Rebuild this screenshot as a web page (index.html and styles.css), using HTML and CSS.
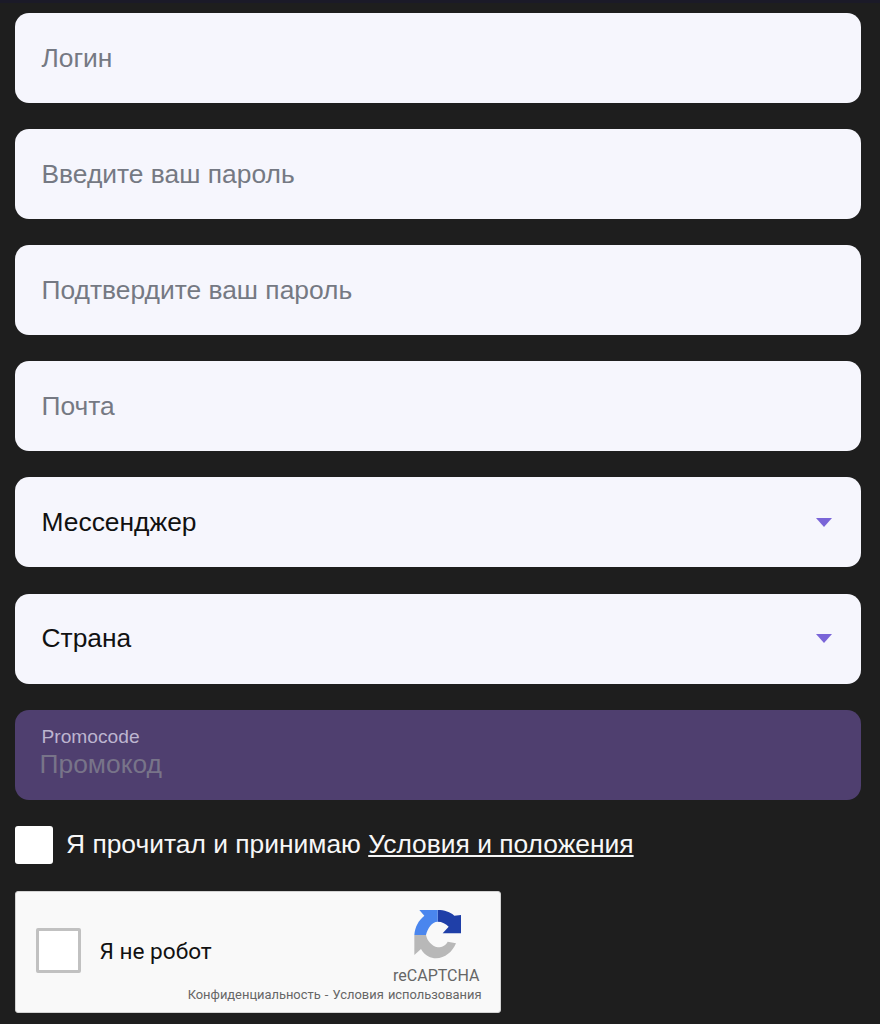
FILE: index.html
```html
<!DOCTYPE html>
<html lang="ru">
<head>
<meta charset="utf-8">
<title>Регистрация</title>
<link rel="stylesheet" href="styles.css">
</head>
<body>
<form class="form">
  <div class="field placeholder">Логин</div>
  <div class="field placeholder">Введите ваш пароль</div>
  <div class="field placeholder">Подтвердите ваш пароль</div>
  <div class="field placeholder">Почта</div>
  <div class="field select"><span>Мессенджер</span><i class="caret"></i></div>
  <div class="field select"><span>Страна</span><i class="caret"></i></div>
  <div class="promo">
    <div class="promo-label">Promocode</div>
    <div class="promo-value">Промокод</div>
  </div>
  <div class="terms">
    <span class="terms-box"></span>
    <span class="terms-text">Я прочитал и принимаю <a href="#" class="terms-link">Условия и положения</a></span>
  </div>
  <div class="captcha">
    <span class="captcha-box"></span>
    <span class="captcha-label">Я не робот</span>
    <div class="captcha-brand">
      <svg class="captcha-logo" viewBox="0 0 240 195" aria-hidden="true">
        <path fill="#1f3fa8" d="M110 30C130 30 148 36 160 47L180 45V100H125L143 80C135 71 123 65 110 65Z"/>
        <path fill="#4a86ee" d="M55 30H110V65C92 65 80 85 75 105H40C42 80 52 62 70 47Z"/>
        <path fill="#b8b8b8" d="M40 105H75C78 122 92 138 110 142C125 142 135 135 140 125L165 130C155 155 132 175 105 175C90 175 72 168 60 147L40 165Z"/>
      </svg>
      <div class="captcha-name">reCAPTCHA</div>
      <div class="captcha-links">Конфиденциальность - Условия использования</div>
    </div>
  </div>
</form>
</body>
</html>
```

FILE: styles.css
```css
* { box-sizing: border-box; }
html, body { margin: 0; padding: 0; }
body {
  width: 880px;
  height: 1024px;
  overflow: hidden;
  background: #1e1e1e;
  font-family: "Liberation Sans", Arial, sans-serif;
}
.form {
  display: flex;
  flex-direction: column;
  gap: 26.12px;
  border-top: 3px solid #1b1a28;
  padding: 10px 19.5px 0 14.5px;
}
.field {
  height: 90px;
  background: #f6f6fd;
  border-radius: 14px;
  padding: 0 27px;
  display: flex;
  align-items: center;
  justify-content: space-between;
  font-size: 26.4px;
  color: #111;
}
.placeholder { color: #757983; }
.caret {
  width: 0;
  height: 0;
  margin-right: 2px;
  border-left: 8px solid transparent;
  border-right: 8px solid transparent;
  border-top: 9px solid #7a65d8;
}
.promo {
  height: 90px;
  background: #4f3f6f;
  border-radius: 14px;
  padding: 16px 25px 0;
}
.promo-label {
  font-size: 19.2px;
  line-height: 22px;
  margin-left: 2px;
  color: #bdb5d0;
}
.promo-value {
  font-size: 26.4px;
  line-height: 32px;
  color: #787489;
}
.terms {
  display: flex;
  align-items: center;
  gap: 13px;
  height: 38px;
  padding-left: 0.5px;
}
.terms-box {
  width: 38px;
  height: 38px;
  background: #fff;
  border-radius: 3px;
}
.terms-text {
  font-size: 26.4px;
  color: #f7f7f7;
}
.terms-link {
  color: #f7f7f7;
  text-decoration: underline;
}
.captcha {
  position: relative;
  margin-top: 1px;
  width: 486.5px;
  height: 122px;
  background: #f9f9f9;
  border: 1px solid #d3d3d3;
  border-radius: 3px;
  display: flex;
  align-items: center;
  padding-left: 20px;
}
.captcha-box {
  width: 45px;
  height: 45px;
  margin-top: -3px;
  background: #fff;
  border: 3px solid #c1c1c1;
  border-radius: 2px;
}
.captcha-label {
  margin-left: 19px;
  font-family: Roboto, sans-serif;
  font-size: 22.6px;
  color: #111;
}
.captcha-brand {
  position: absolute;
  right: 18.5px;
  top: 8px;
  display: flex;
  flex-direction: column;
  align-items: flex-end;
  font-family: Roboto, sans-serif;
}
.captcha-logo {
  width: 80px;
  height: 65px;
  margin-right: 1px;
}
.captcha-name {
  margin-top: 1px;
  font-size: 16px;
  line-height: 20px;
  color: #666;
  margin-right: 2px;
}
.captcha-links {
  font-size: 12.9px;
  line-height: 18px;
  word-spacing: 1px;
  color: #666;
}
```
